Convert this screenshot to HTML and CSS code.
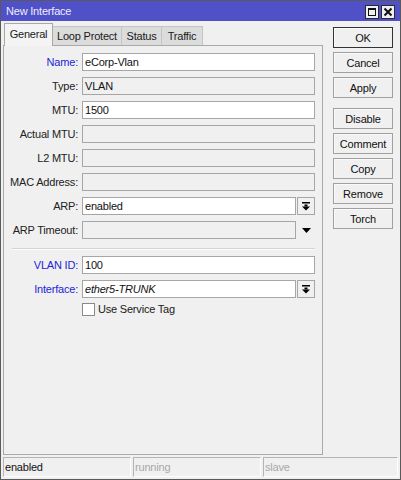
FILE: index.html
```html
<!DOCTYPE html>
<html>
<head>
<meta charset="utf-8">
<link rel="stylesheet" href="styles.css">
</head>
<body>
<div class="window">
  <div class="titlebar">
    <span class="title">New Interface</span>
    <div class="tb-btns">
      <span class="tb-btn"><svg width="10" height="10" viewBox="0 0 10 10"><rect x="1.5" y="1.5" width="7" height="7" fill="none" stroke="#111" stroke-width="1"/><rect x="1" y="1" width="8" height="2" fill="#111"/></svg></span>
      <span class="tb-btn"><svg width="10" height="10" viewBox="0 0 10 10"><path d="M1.5 1.5 L8.5 8.5 M8.5 1.5 L1.5 8.5" stroke="#111" stroke-width="2" fill="none"/></svg></span>
    </div>
  </div>
  <div class="main">
    <div class="left">
      <div class="tabs">
        <span class="tab tab-active tab-general">General</span>
        <span class="tab tab-loop">Loop Protect</span>
        <span class="tab tab-status">Status</span>
        <span class="tab tab-traffic">Traffic</span>
      </div>
      <div class="panel">
        <div class="row"><label class="lbl lbl-blue">Name:</label><div class="field">eCorp-Vlan</div></div>
        <div class="row"><label class="lbl">Type:</label><div class="field field-ro">VLAN</div></div>
        <div class="row"><label class="lbl">MTU:</label><div class="field">1500</div></div>
        <div class="row"><label class="lbl">Actual MTU:</label><div class="field field-ro"></div></div>
        <div class="row"><label class="lbl">L2 MTU:</label><div class="field field-ro"></div></div>
        <div class="row"><label class="lbl">MAC Address:</label><div class="field field-ro"></div></div>
        <div class="row"><label class="lbl">ARP:</label>
          <div class="combo"><div class="field">enabled</div><span class="dd-btn"><svg width="8" height="9" viewBox="0 0 8 9"><rect x="0" y="0" width="8" height="1.5" fill="#000"/><rect x="2.5" y="2.5" width="3" height="2" fill="#000"/><polygon points="0,4.5 8,4.5 4,8.5" fill="#000"/></svg></span></div>
        </div>
        <div class="row"><label class="lbl">ARP Timeout:</label>
          <div class="combo"><div class="field field-ro"></div><span class="dd-arrow"><svg width="9" height="5" viewBox="0 0 9 5"><polygon points="0,0 9,0 4.5,5" fill="#000"/></svg></span></div>
        </div>
        <div class="sep"></div>
        <div class="row"><label class="lbl lbl-blue">VLAN ID:</label><div class="field">100</div></div>
        <div class="row"><label class="lbl lbl-blue">Interface:</label>
          <div class="combo"><div class="field field-italic">ether5-TRUNK</div><span class="dd-btn"><svg width="8" height="9" viewBox="0 0 8 9"><rect x="0" y="0" width="8" height="1.5" fill="#000"/><rect x="2.5" y="2.5" width="3" height="2" fill="#000"/><polygon points="0,4.5 8,4.5 4,8.5" fill="#000"/></svg></span></div>
        </div>
        <div class="row row-check"><span></span><div class="check"><span class="box"></span><span class="check-text">Use Service Tag</span></div></div>
      </div>
    </div>
    <div class="buttons">
      <span class="btn btn-default">OK</span>
      <span class="btn">Cancel</span>
      <span class="btn">Apply</span>
      <span class="btn btn-gap">Disable</span>
      <span class="btn">Comment</span>
      <span class="btn">Copy</span>
      <span class="btn">Remove</span>
      <span class="btn">Torch</span>
    </div>
  </div>
  <div class="statusbar">
    <span class="cell">enabled</span>
    <span class="cell cell-dim">running</span>
    <span class="cell cell-dim">slave</span>
  </div>
</div>
</body>
</html>
```

FILE: styles.css
```css
* { box-sizing: border-box; }
html, body { margin: 0; padding: 0; background: #f0f0f0; }
body {
  font-family: "Liberation Sans", Arial, sans-serif;
  font-size: 11px;
  letter-spacing: -0.2px;
  color: #1a1a1a;
}
.window {
  width: 401px;
  height: 480px;
  border: 1px solid #5a5a5a;
  background: #f0f0f0;
  display: flex;
  flex-direction: column;
}
.titlebar {
  height: 20px;
  background: #5050c8;
  display: flex;
  align-items: center;
  justify-content: space-between;
  padding: 0 5px 0 5px;
}
.title { color: #eeeefa; font-size: 11px; line-height: 20px; }
.tb-btns { display: flex; gap: 2px; margin-top: 2px; }
.tb-btn {
  width: 14px; height: 14px;
  background: #f0f0f0;
  border: 1px solid #2a2a2a;
  display: flex; align-items: center; justify-content: center;
}
.main {
  height: 435px;
  display: flex;
  gap: 10px;
  padding-left: 2px;
}
.left { width: 320px; display: flex; flex-direction: column; padding-top: 2px; }
.tabs { display: flex; height: 22px; align-items: flex-end; padding-left: 1px; position: relative; z-index: 1; }
.tab {
  height: 19px;
  background: #dcdcdc;
  border: 1px solid #c4c4c4;
  border-bottom: none;
  display: flex; align-items: center; justify-content: center;
  line-height: 18px;
}
.tab-active {
  height: 23px;
  margin-bottom: -1px;
  background: #f4f4f4;
  border-color: #a8a8a8;
  padding-bottom: 2px;
}
.tab-general { width: 49px; }
.tab-loop { width: 69px; border-left: none; }
.tab-status { width: 40px; border-left: none; }
.tab-traffic { width: 41px; border-left: none; }
.panel {
  height: 410px;
  border: 1px solid #aaaaaa;
  padding: 7px 7px 0 0;
  display: flex;
  flex-direction: column;
  gap: 6px;
}
.row {
  display: grid;
  grid-template-columns: 74px 1fr;
  column-gap: 4px;
  align-items: center;
  height: 18px;
}
.lbl { text-align: right; color: #222; white-space: nowrap; }
.lbl-blue { color: #2424d8; }
.field {
  height: 18px;
  background: #ffffff;
  border: 1px solid #a6a6a6;
  padding-left: 2px;
  line-height: 16px;
  color: #111;
  white-space: nowrap;
  flex: 1;
}
.field-ro { background: #f0f0f0; }
.field-italic { font-style: italic; }
.combo { display: flex; gap: 1px; height: 18px; }
.dd-btn {
  width: 18px; height: 18px;
  border: 1px solid #a6a6a6;
  background: #f0f0f0;
  display: flex; align-items: center; justify-content: center;
  flex: none;
}
.dd-arrow {
  width: 18px; height: 18px; flex: none;
  display: flex; align-items: center; justify-content: center;
  padding-left: 1px;
}
.sep {
  height: 5px;
  margin-left: 8px;
  padding-top: 3px;
}
.sep::after {
  content: "";
  display: block;
  border-top: 1px solid #d4d4d4;
  border-bottom: 1px solid #fbfbfb;
}
.row-check { align-items: start; }
.check { display: flex; align-items: center; gap: 3px; height: 13px; margin-top: -1px; }
.check-text { line-height: 13px; }
.box { width: 13px; height: 13px; background: #fff; border: 1px solid #8a8a8a; }
.buttons {
  width: 60px;
  display: flex;
  flex-direction: column;
  gap: 4px;
  padding-top: 6px;
}
.btn {
  height: 21px;
  border: 1px solid #a0a0a0;
  background: #f0f0f0;
  box-shadow: inset 1px 1px 0 #fafafa;
  display: flex; align-items: center; justify-content: center;
  color: #111;
}
.btn-default { border-color: #333; }
.btn-gap { margin-top: 6px; }
.statusbar {
  height: 23px;
  padding: 1px 2px 2px 2px;
  display: grid;
  grid-template-columns: 128px 128px 1fr;
  column-gap: 2px;
}
.cell {
  height: 20px;
  border: 1px solid #b4b4b4;
  border-right-color: #fdfdfd;
  border-bottom-color: #fdfdfd;
  padding-left: 1px;
  line-height: 18px;
  color: #111;
}
.cell-dim { color: #a8a8a8; }
```
